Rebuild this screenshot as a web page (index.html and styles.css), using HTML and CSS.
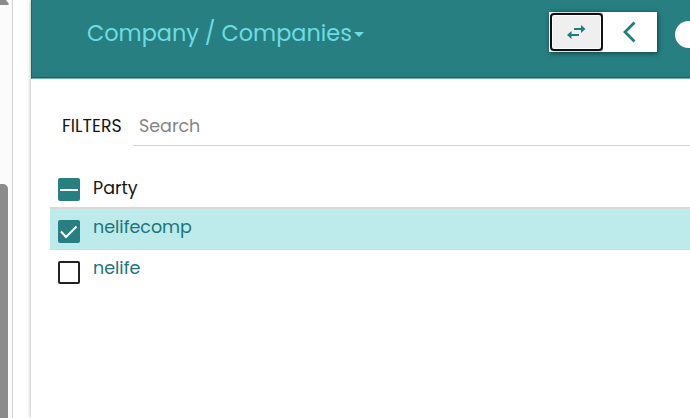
FILE: index.html
```html
<!DOCTYPE html>
<html lang="en">
<head>
  <meta charset="UTF-8">
  <meta name="viewport" content="width=device-width, initial-scale=1.0">
  <title>Companies</title>
  <link rel="stylesheet" href="styles.css">
</head>
<body>
  <div class="scrollbar">
    <div class="thumb-end"></div>
    <div class="thumb"></div>
  </div>
  <div class="panel">
    <header class="header">
      <div class="title"><span class="title-text">Company / Companies</span><span class="caret"></span></div>
      <div class="buttons">
        <button class="btn focused" aria-label="Swap">
          <svg width="20" height="16" viewBox="0 0 20 16">
            <path d="M8 5h8M13 11H5" fill="none" stroke="#1b7f82" stroke-width="2.200"/>
            <path d="M15 1l4.500 4-4.500 4zM5.500 7L1 11l4.500 4z" fill="#1b7f82"/>
          </svg>
        </button>
        <button class="btn" aria-label="Back">
          <svg width="16" height="22" viewBox="0 0 16 22">
            <path d="M12.500 1.500L3 11l9.500 9.500" fill="none" stroke="#1b7f82" stroke-width="2.800"/>
          </svg>
        </button>
      </div>
      <div class="toggle"></div>
    </header>
    <div class="filters">
      <span class="filters-label">FILTERS</span>
      <input class="search" type="text" placeholder="Search">
    </div>
    <div class="list">
      <div class="row party">
        <span class="box filled">
          <svg width="22" height="23" viewBox="0 0 22 23"><path d="M2 12h18" fill="none" stroke="#fff" stroke-width="2"/></svg>
        </span>
        <span class="label">Party</span>
      </div>
      <div class="row selected">
        <span class="box filled">
          <svg width="22" height="23" viewBox="0 0 22 23"><path d="M3 11.500l5 5.500L18.500 6.500" fill="none" stroke="#fff" stroke-width="2"/></svg>
        </span>
        <span class="label">nelifecomp</span>
      </div>
      <div class="row last">
        <span class="box"></span>
        <span class="label">nelife</span>
      </div>
    </div>
  </div>
</body>
</html>
```
FILE: styles.css
```css
* {
  box-sizing: border-box;
}

body {
  display: flex;
  height: 418px;
  margin: 0;
  overflow: hidden;
  background: #fff;
  font-family: Poppins, Inter, sans-serif;
}

.scrollbar {
  display: flex;
  flex-direction: column;
  justify-content: space-between;
  flex: none;
  width: 13px;
  background: #fbfbfb;
  border-right: 1px solid #d2d2d2;
}

.thumb-end {
  width: 9px;
  height: 5px;
  background: #8b8b8b;
  clip-path: polygon(0 0, 6px 0, 9px 4px, 8px 5px, 0 5px);
}

.thumb {
  width: 8px;
  height: 234px;
  background: #8b8b8b;
  border-top-right-radius: 5px;
}

.panel {
  flex: none;
  width: 659px;
  margin-left: 18px;
  background: #fff;
  box-shadow: 0 0 4px rgba(0, 0, 0, 0.35);
}

.header {
  display: flex;
  height: 79px;
  padding-left: 55px;
  overflow: hidden;
  background: #277f82;
  border-left: 1px solid #0c6c6f;
  border-bottom: 1px solid #78adaf;
  box-shadow: inset 0 -1px #0c6c6f;
}

.title {
  display: flex;
  flex: none;
  width: 462px;
  padding-top: 18px;
  font-size: 22.400px;
  line-height: 30px;
  color: #6cdce3;
  white-space: nowrap;
}

.title-text {
  width: 267px;
}

.caret {
  width: 10px;
  height: 5px;
  margin-top: 14px;
  background: #6cdce3;
  clip-path: polygon(0 0, 100% 0, 50% 100%);
}

.buttons {
  display: flex;
  flex: none;
  width: 108px;
  height: 40px;
  margin-top: 12px;
  background: #fff;
  box-shadow: 1px 1px 5px rgba(0, 0, 0, 0.5);
}

.btn {
  display: flex;
  align-items: center;
  justify-content: center;
  width: 54px;
  height: 40px;
  padding: 0;
  background: #fff;
  border: none;
}

.btn.focused {
  width: 53px;
  height: 38px;
  margin: 1px 0 1px 1px;
  padding-right: 2px;
  background: #efefef;
  border: 2px solid #101010;
  border-radius: 4px;
  box-shadow: inset 0 0 0 1px #fff, 2px 0 3px rgba(0, 0, 0, 0.35);
}

.toggle {
  flex: none;
  width: 48px;
  height: 27px;
  margin: 21px 0 0 18px;
  background: #fff;
  border-radius: 14px;
}

.filters {
  display: flex;
  height: 67px;
  padding: 28px 0 0 31px;
}

.filters-label {
  width: 71px;
  font-size: 17.400px;
  line-height: 38px;
  color: #151515;
}

.search {
  width: 557px;
  height: 39px;
  padding: 0 6px;
  background: none;
  border: none;
  border-bottom: 1px solid #d2d2d2;
  outline: none;
  font-family: inherit;
  font-size: 17.500px;
}

.search::placeholder {
  color: #858585;
}

.list {
  padding: 30px 0 0 19px;
}

.row {
  display: flex;
  gap: 13px;
  padding-left: 8px;
  color: #1b7578;
}

.party {
  height: 31px;
  padding-top: 2px;
  color: #151515;
}

.selected {
  height: 43px;
  padding-top: 11px;
  background: #bdeaea;
  border-top: 2px solid #d8d8d8;
  border-bottom: 1px solid #d8d8d8;
}

.last {
  padding-top: 11px;
}

.box {
  flex: none;
  width: 22px;
  height: 23px;
  border: 2px solid #222;
  border-radius: 2px;
}

.box.filled {
  background: #277f82;
  border: none;
}

.box svg {
  display: block;
}

.label {
  margin-top: -4px;
  font-size: 17.500px;
  line-height: 23px;
}

.party .label {
  margin-top: -1px;
}
```
